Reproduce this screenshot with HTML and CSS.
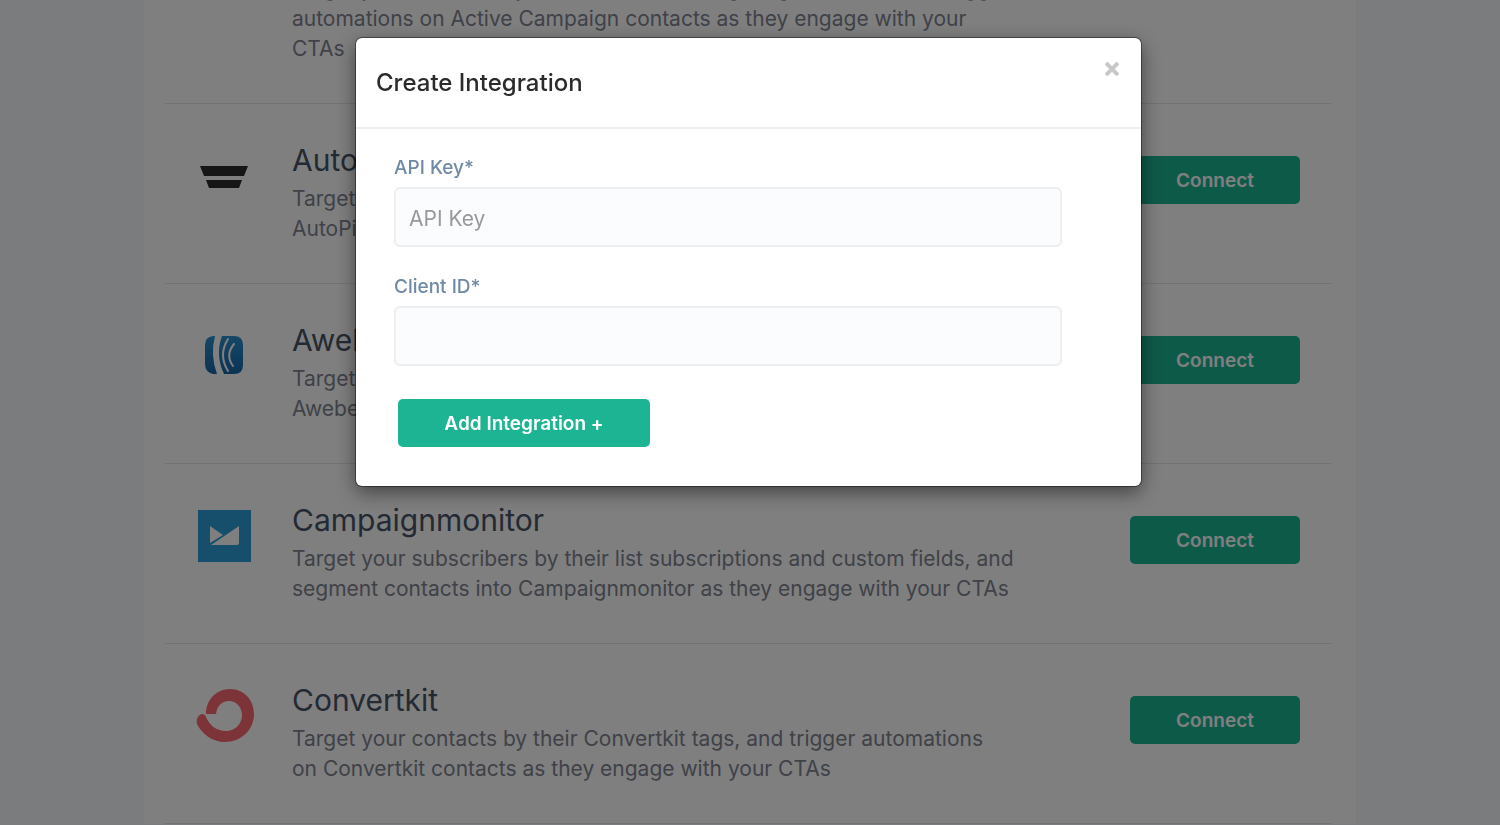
FILE: index.html
```html
<!DOCTYPE html>
<html lang="en">
<head>
    <meta charset="UTF-8">
    <meta name="viewport" content="width=device-width, initial-scale=1.0">
    <title>Create Integration</title>
    <link rel="stylesheet" href="styles.css">
</head>
<body>
    <main class="panel">
        <ul class="integrations">
            <li class="integration">
                <div class="logo"></div>
                <div class="info">
                    <h2>Active Campaign</h2>
                    <p>Target your contacts by their Active Campaign tags and lists, and trigger<br>automations on Active Campaign contacts as they engage with your<br>CTAs</p>
                </div>
                <button type="button" class="btn connect">Connect</button>
            </li>
            <li class="integration">
                <div class="logo">
                    <svg width="60" height="54" viewBox="0 0 60 54" aria-hidden="true">
                        <path fill="#2c2c2c" d="M6 17h48l-4 10H10zM12 31h36l-3 8H15z"/>
                    </svg>
                </div>
                <div class="info">
                    <h2>Autopilot</h2>
                    <p>Target your contacts by their lists, and segment<br>AutoPilot contacts as they engage with your CTAs</p>
                </div>
                <button type="button" class="btn connect">Connect</button>
            </li>
            <li class="integration">
                <div class="logo">
                    <svg width="60" height="54" viewBox="0 0 60 54" aria-hidden="true">
                        <defs>
                            <linearGradient id="aweber" x1="0" y1="0" x2="0" y2="1">
                                <stop offset="0" stop-color="#2a8fd0"/>
                                <stop offset="1" stop-color="#1868a4"/>
                            </linearGradient>
                        </defs>
                        <path fill="url(#aweber)" d="M21 7H19Q11 8 11 16V35Q11 43 19 45H23Q16 26 21 7Z"/>
                        <path fill="url(#aweber)" d="M28 7H40Q49 7 49 16V36Q49 45 40 45H30Q21 26 28 7Z"/>
                        <path fill="none" stroke="#fff" stroke-width="2" stroke-linecap="round" d="M34 10Q24 26 34 42M40 15Q31 26 39 37"/>
                    </svg>
                </div>
                <div class="info">
                    <h2>Aweber</h2>
                    <p>Target your subscribers by their lists, and segment<br>Aweber contacts as they engage with your CTAs</p>
                </div>
                <button type="button" class="btn connect">Connect</button>
            </li>
            <li class="integration">
                <div class="logo">
                    <svg width="60" height="54" viewBox="0 0 60 54" aria-hidden="true">
                        <path fill="#2a9fd8" d="M4 1h53v52H4z"/>
                        <path fill="#fff" d="M16 17l13 9-13 8zM45 17v17q0 2-2 2H17z"/>
                    </svg>
                </div>
                <div class="info">
                    <h2>Campaignmonitor</h2>
                    <p>Target your subscribers by their list subscriptions and custom fields, and<br>segment contacts into Campaignmonitor as they engage with your CTAs</p>
                </div>
                <button type="button" class="btn connect">Connect</button>
            </li>
            <li class="integration">
                <div class="logo">
                    <svg width="60" height="54" viewBox="0 0 60 54" aria-hidden="true">
                        <path fill="#fb6970" d="M12 25C12 11 22 0 36 0C50 0 60 11 60 25C60 41 47 53 31 53C18 53 8 45 3 35C2 30 4 26 8 25Q11 25 12 28C16 37 23 42 32 42C41 42 48 35 48 26C48 18 42 12 35 12C28 12 23 17 22 25Z"/>
                    </svg>
                </div>
                <div class="info">
                    <h2>Convertkit</h2>
                    <p>Target your contacts by their Convertkit tags, and trigger automations<br>on Convertkit contacts as they engage with your CTAs</p>
                </div>
                <button type="button" class="btn connect">Connect</button>
            </li>
        </ul>
    </main>

    <div class="overlay">
        <div class="modal" role="dialog" aria-modal="true" aria-labelledby="modal-title">
            <header class="modal-header">
                <h1 id="modal-title">Create Integration</h1>
                <button type="button" class="close" aria-label="Close">
                    <svg width="14" height="14" viewBox="0 0 14 14" aria-hidden="true">
                        <path fill="none" stroke="#c8c8c8" stroke-width="4" d="M1 1l12 12M13 1L1 13"/>
                    </svg>
                </button>
            </header>
            <form class="modal-body">
                <label for="api-key">API Key*</label>
                <input type="text" id="api-key" placeholder="API Key">
                <label for="client-id">Client ID*</label>
                <input type="text" id="client-id">
                <button type="button" class="btn submit">Add Integration +</button>
            </form>
        </div>
    </div>
</body>
</html>
```
FILE: styles.css
```css
*, *:before, *:after {
    box-sizing: border-box;
}

body {
    margin: 0;
    height: 100vh;
    overflow: hidden;
    background-color: #f6f9fd;
    font-family: Inter, "Liberation Sans", sans-serif;
}

h1, h2, p, ul {
    margin: 0;
    padding: 0;
}

.panel {
    max-width: 1212px;
    min-height: 100vh;
    margin: 0 auto;
    padding: 0 24px 0 21px;
    background-color: #fff;
}

/* list is scrolled part of the way down */
.integrations {
    margin-top: -106px;
    list-style: none;
}

.integration {
    display: flex;
    align-items: flex-start;
    padding: 39px 32px 39px 0;
    border-bottom: 1px solid #e6e6e6;
}

.logo {
    flex: none;
    width: 127px;
    padding: 6px 0 0 29px;
}

.logo svg {
    display: block;
}

.info {
    flex: 1;
    min-width: 0;
}

.info h2 {
    margin-bottom: 6px;
    color: #465468;
    font-size: 30px;
    font-weight: 400;
    line-height: 35px;
}

.info p {
    color: #7e8490;
    font-size: 21px;
    line-height: 30px;
    white-space: nowrap;
}

.btn {
    height: 48px;
    padding: 0;
    border: 0;
    border-radius: 5px;
    background-color: #1cb492;
    color: #fff;
    font-family: inherit;
    font-size: 19px;
    font-weight: 600;
    cursor: pointer;
}

.connect {
    flex: none;
    width: 170px;
    margin-top: 13px;
}

/* Modal */
.overlay {
    position: fixed;
    inset: 0;
    padding: 38px 3px 0 0;
    background-color: rgba(0, 0, 0, 0.5);
}

.modal {
    max-width: 785px;
    margin: 0 auto;
    border-radius: 6px;
    background-color: #fff;
    box-shadow: 0 0 0 1px rgba(0, 0, 0, 0.4), 0 6px 20px rgba(0, 0, 0, 0.5);
}

.modal-header {
    display: flex;
    justify-content: space-between;
    align-items: flex-start;
    padding: 20px 20px 19px;
    border-bottom: 2px solid #edeff0;
}

.modal-header h1 {
    color: #2b2b2b;
    font-size: 24px;
    font-weight: 500;
    line-height: 50px;
}

.close {
    padding: 4px 2px;
    border: 0;
    background: none;
    cursor: pointer;
}

.close svg {
    display: block;
}

.modal-body {
    padding: 25px 79px 39px 38px;
}

.modal-body label {
    display: block;
    margin-bottom: 5px;
    color: #6f8aa5;
    font-size: 19px;
    font-weight: 500;
    line-height: 28px;
}

.modal-body input {
    display: block;
    width: 100%;
    height: 60px;
    margin-bottom: 26px;
    padding: 2px 13px 0;
    border: 2px solid #eceef0;
    border-radius: 6px;
    background-color: #fafcfe;
    color: #444;
    font-family: inherit;
    font-size: 21px;
}

.modal-body input::placeholder {
    color: #999;
}

.submit {
    display: block;
    width: 252px;
    margin: 33px 0 0 4px;
}
```
